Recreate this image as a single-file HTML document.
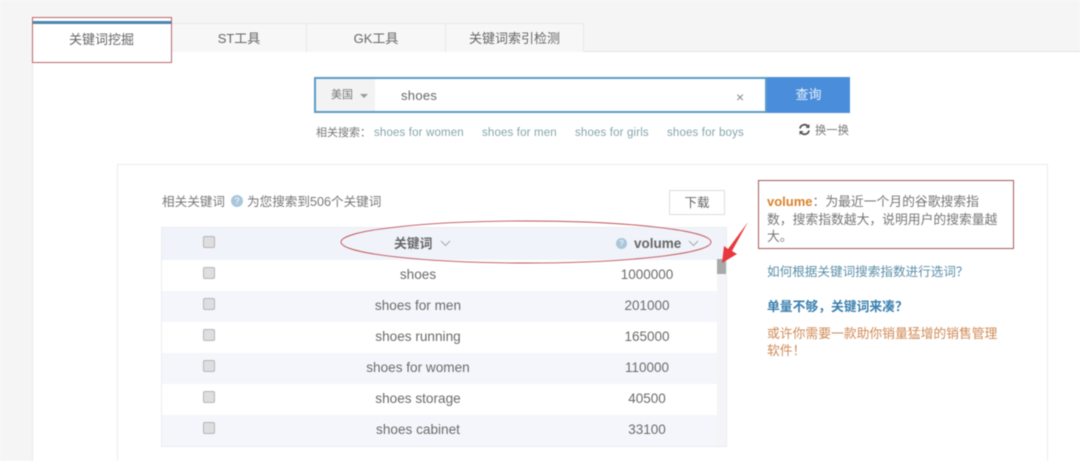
<!DOCTYPE html>
<html><head><meta charset="utf-8">
<style>
html,body{margin:0;padding:0;background:#fff;}
#p{position:relative;width:1080px;height:461px;overflow:hidden;background:#fff;font-family:"Liberation Sans","Noto Sans CJK SC",sans-serif;color:#666;filter:blur(.4px);}
#p div{position:absolute;white-space:nowrap;}
.row{left:162px;width:555px;height:31px;}
.cb{left:203px;width:10px;height:10px;background:#dedee0;border:1px solid #b5b5b8;border-radius:2px;}
.k,.v{font-size:13.6px;line-height:18px;text-align:center;color:#6b6b6b;}
.k{left:318px;width:200px;}
.v{left:597px;width:100px;font-size:13.5px;}
.tab{top:23px;height:28px;background:#f7f7f7;border:1px solid #e8e8e8;border-bottom:none;border-left:none;text-align:center;line-height:29px;font-size:13px;color:#666;}
.lk{top:125px;font-size:11.5px;line-height:16px;color:#85a5ac;letter-spacing:.15px;}
.t{font-size:12.8px;line-height:18px;color:#777;}
</style></head><body><div id="p">
<div style="left:0;top:0;width:1080px;height:51px;background:#f6f5f6;"></div>
<div style="left:0;top:51px;width:32px;height:410px;background:#f5f5f5;"></div>
<div style="left:32px;top:51px;width:1px;height:410px;background:#e9e9e9;"></div>
<div style="left:32px;top:51px;width:1048px;height:1px;background:#e4e4e4;"></div>
<div class="tab" style="left:172px;width:134px;">ST工具</div>
<div class="tab" style="left:307px;width:138px;">GK工具</div>
<div class="tab" style="left:446px;width:137px;">关键词索引检测</div>
<div style="left:32px;top:17px;width:140px;height:46px;box-sizing:border-box;background:#fff;border:1px solid #b9666a;"></div>
<div style="left:33px;top:21px;width:138px;height:3px;background:#4a86b0;"></div>
<div style="left:32px;top:31px;width:139px;text-align:center;font-size:13px;line-height:18px;color:#666;">关键词挖掘</div>

<!-- search -->
<div style="left:314px;top:77px;width:453px;height:36px;border:2px solid #5b9bc9;box-sizing:border-box;background:#fff;"></div>
<div style="left:316px;top:79px;width:59px;height:32px;background:#f3f3f3;"></div>
<div style="left:331px;top:88px;font-size:11px;line-height:15px;color:#777;">美国</div>
<div style="left:360px;top:94px;width:0;height:0;border:4px solid transparent;border-top:4px solid #999;border-bottom:0;"></div>
<div style="left:401px;top:87px;font-size:13px;line-height:18px;color:#666;letter-spacing:.3px;">shoes</div>
<div style="left:736px;top:88px;font-size:14px;line-height:18px;color:#888;">×</div>
<div style="left:767px;top:77px;width:83px;height:36px;background:#4a8edb;color:#e8f1fb;font-size:13px;line-height:36px;text-align:center;">查询</div>

<div style="left:316px;top:125px;font-size:11px;line-height:16px;color:#777;">相关搜索：</div>
<div class="lk" style="left:374px;">shoes for women</div>
<div class="lk" style="left:482px;">shoes for men</div>
<div class="lk" style="left:575px;">shoes for girls</div>
<div class="lk" style="left:667px;">shoes for boys</div>
<svg style="position:absolute;left:798px;top:123px" width="13" height="13" viewBox="0 0 13 13"><path d="M2 5.500A4.500 4.500 0 0 1 10 3.500M11 7.500A4.500 4.500 0 0 1 3 9.500" fill="none" stroke="#555" stroke-width="1.800"/><path d="M11.500 1v4h-4zM1.500 12V8h4z" fill="#555"/></svg>
<div style="left:815px;top:123px;font-size:11.3px;line-height:16px;color:#777;">换一换</div>

<!-- panel -->
<div style="left:117px;top:164px;width:931px;height:297px;border:1px solid #ececec;border-bottom:none;box-sizing:border-box;background:#fff;"></div>
<div style="left:162px;top:194px;font-size:12.6px;line-height:16px;color:#777;">相关关键词</div>
<div style="left:231px;top:195px;width:12px;height:12px;border-radius:50%;background:#a9c6da;color:#fff;font-size:9px;line-height:12px;text-align:center;">?</div>
<div style="left:247px;top:194px;font-size:12.6px;line-height:16px;color:#777;">为您搜索到506个关键词</div>
<div style="left:669px;top:190px;width:56px;height:25px;border:1px solid #ddd;box-sizing:border-box;background:#fff;text-align:center;line-height:24px;font-size:12.500px;color:#666;">下载</div>

<!-- table -->
<div style="left:161px;top:227px;width:566px;height:220px;background:#f5f6fb;border:1px solid #ecedf2;box-sizing:border-box;"></div>
<div style="left:162px;top:228px;width:564px;height:32px;background:#f0f3f9;"></div>
<div class="row" style="top:260px;background:#fff;"></div>
<div class="row" style="top:291px;background:#f5f6fc;"></div>
<div class="row" style="top:322px;background:#fff;"></div>
<div class="row" style="top:353px;background:#f5f6fc;"></div>
<div class="row" style="top:384px;background:#fff;"></div>
<div class="row" style="top:415px;background:#f5f6fc;"></div>
<div style="left:717px;top:260px;width:9px;height:186px;background:#f5f5f7;"></div>
<div style="left:717px;top:259px;width:9px;height:15px;background:#a9a9ab;"></div>

<div class="cb" style="top:236px;"></div>
<div class="cb" style="top:267px;"></div>
<div class="cb" style="top:298px;"></div>
<div class="cb" style="top:329px;"></div>
<div class="cb" style="top:360px;"></div>
<div class="cb" style="top:391px;"></div>
<div class="cb" style="top:422px;"></div>

<div style="left:394px;top:235px;font-size:12.800px;line-height:18px;font-weight:bold;color:#666;">关键词</div>
<svg style="position:absolute;left:440px;top:240px" width="11" height="7" viewBox="0 0 11 7"><path d="M1 1l4.500 4.500L10 1" fill="none" stroke="#aaa" stroke-width="1.100"/></svg>
<div style="left:616px;top:238px;width:11px;height:11px;border-radius:50%;background:#a9c6da;color:#fff;font-size:8px;line-height:11px;text-align:center;">?</div>
<div style="left:634px;top:235px;font-size:13.500px;line-height:18px;font-weight:bold;color:#666;">volume</div>
<svg style="position:absolute;left:688px;top:240px" width="11" height="7" viewBox="0 0 11 7"><path d="M1 1l4.500 4.500L10 1" fill="none" stroke="#aaa" stroke-width="1.100"/></svg>

<div class="k" style="top:266px;">shoes</div><div class="v" style="top:266px;">1000000</div>
<div class="k" style="top:297px;">shoes for men</div><div class="v" style="top:297px;">201000</div>
<div class="k" style="top:328px;">shoes running</div><div class="v" style="top:328px;">165000</div>
<div class="k" style="top:359px;">shoes for women</div><div class="v" style="top:359px;">110000</div>
<div class="k" style="top:390px;">shoes storage</div><div class="v" style="top:390px;">40500</div>
<div class="k" style="top:421px;">shoes cabinet</div><div class="v" style="top:421px;">33100</div>

<!-- annotations -->
<svg style="position:absolute;left:330px;top:210px" width="390" height="60" viewBox="0 0 390 60">
<ellipse cx="196" cy="32" rx="185" ry="21" fill="none" stroke="#c0545a" stroke-width=".9"/>
</svg>
<svg style="position:absolute;left:715px;top:215px" width="40" height="52" viewBox="0 0 40 52"><path d="M33 7L17 36L22 39L7 48L9 31L13 34Z" fill="#e8383e"/></svg>

<!-- side -->
<div style="left:758px;top:180px;width:256px;height:69px;border:1px solid #a8585a;box-sizing:border-box;background:#fff;"></div>
<div class="t" style="left:767px;top:193px;"><b style="color:#d9822b;font-size:13px;">volume</b>：为最近一个月的谷歌搜索指</div>
<div class="t" style="left:767px;top:211px;">数，搜索指数越大，说明用户的搜索量越</div>
<div class="t" style="left:767px;top:228px;">大。</div>
<div style="left:767px;top:264px;font-size:12.600px;line-height:16px;color:#5b8fa8;">如何根据关键词搜索指数进行选词？</div>
<div style="left:767px;top:298px;font-size:12.800px;line-height:18px;font-weight:bold;color:#3a7fae;">单量不够，关键词来凑？</div>
<div style="left:767px;top:325px;font-size:12.800px;line-height:17px;color:#d08a55;">或许你需要一款助你销量猛增的销售管理</div>
<div style="left:767px;top:342px;font-size:12.800px;line-height:17px;color:#d08a55;">软件！</div>
</div></body></html>
